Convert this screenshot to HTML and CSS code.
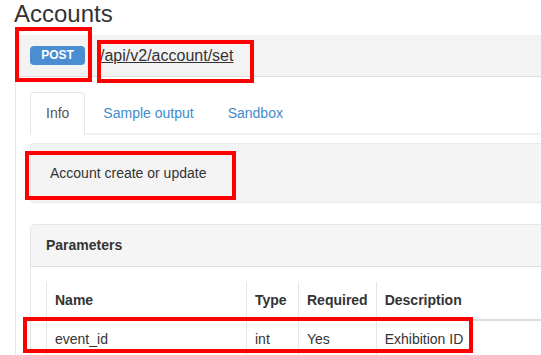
FILE: index.html
```html
<!DOCTYPE html>
<html lang="en">
<head>
    <meta charset="UTF-8">
    <meta name="viewport" content="width=device-width, initial-scale=1.0">
    <title>Accounts - API docs</title>
    <link rel="stylesheet" href="styles.css">
</head>
<body>
    <h1 class="page-title">Accounts</h1>

    <div class="endpoint">
        <div class="endpoint-heading">
            <span class="method-badge">POST</span>
            <a href="#" class="endpoint-path">/api/v2/account/set</a>
        </div>

        <div class="endpoint-body">
            <ul class="tabs">
                <li class="tab active"><a href="#">Info</a></li>
                <li class="tab"><a href="#">Sample output</a></li>
                <li class="tab"><a href="#">Sandbox</a></li>
            </ul>

            <div class="tab-content">
                <div class="well">Account create or update</div>

                <div class="panel">
                    <div class="panel-heading">Parameters</div>
                    <div class="panel-body">
                        <table class="params">
                            <thead>
                                <tr>
                                    <th class="col-name">Name</th>
                                    <th class="col-type">Type</th>
                                    <th class="col-req">Required</th>
                                    <th>Description</th>
                                </tr>
                            </thead>
                            <tbody>
                                <tr>
                                    <td>event_id</td>
                                    <td>int</td>
                                    <td>Yes</td>
                                    <td>Exhibition ID</td>
                                </tr>
                            </tbody>
                        </table>
                    </div>
                </div>
            </div>
        </div>
    </div>

    <!-- review markers -->
    <div class="marker marker-method"></div>
    <div class="marker marker-path"></div>
    <div class="marker marker-desc"></div>
    <div class="marker marker-row"></div>
</body>
</html>
```

FILE: styles.css
```css
:root {
    --text-color: #333;
    --link-color: #428bca;
    --border-color: #ddd;
    --light-border: #e6e6e6;
    --heading-bg: #f3f3f3;
    --marker-color: #ff0000;
}

* {
    margin: 0;
    padding: 0;
    box-sizing: border-box;
}

html {
    overflow: hidden;
}

body {
    position: relative;
    width: 600px;
    font-family: 'Liberation Sans', Arial, sans-serif;
    font-size: 14px;
    line-height: 20px;
    color: var(--text-color);
    background: white;
}

.page-title {
    font-size: 24px;
    font-weight: 400;
    line-height: 28px;
    padding-left: 14px;
    margin-bottom: 7px;
}

.endpoint {
    margin-left: 15px;
}

.endpoint-heading {
    display: flex;
    align-items: center;
    height: 42px;
    padding-left: 15px;
    background-color: var(--heading-bg);
    border-bottom: 1px solid var(--border-color);
}

.method-badge {
    display: inline-block;
    width: 55px;
    height: 19px;
    line-height: 19px;
    text-align: center;
    font-size: 12px;
    font-weight: 700;
    color: white;
    background-color: #4a8dd0;
    border-radius: 4px;
}

.endpoint-path {
    margin-left: 15px;
    font-size: 16px;
    color: var(--text-color);
    text-decoration: underline;
}

.endpoint-body {
    border-left: 1px solid var(--light-border);
    padding: 15px 0 0 14px;
}

.tabs {
    display: flex;
    list-style: none;
    border-bottom: 2px solid #f2f2f2;
}

.tab {
    margin-right: 2px;
    margin-bottom: -2px;
}

.tab a {
    display: block;
    padding: 10px 15px 11px;
    color: var(--link-color);
    text-decoration: none;
    border: 1px solid transparent;
    border-radius: 4px 4px 0 0;
}

.tab.active a {
    color: #555;
    background: white;
    border-color: var(--light-border);
    border-bottom-color: white;
}

.tab-content {
    padding-top: 8px;
}

.well {
    height: 60px;
    padding: 19px;
    background-color: #f4f4f4;
    border: 1px solid #e9e9e9;
    border-radius: 4px;
}

.panel {
    margin-top: 21px;
    border: 1px solid var(--light-border);
    border-radius: 4px;
}

.panel-heading {
    height: 42px;
    padding: 10px 15px;
    font-weight: 700;
    background-color: #f5f5f5;
    border-bottom: 1px solid var(--border-color);
}

.panel-body {
    padding: 15px;
}

.params {
    width: 100%;
    border-collapse: collapse;
}

.params th,
.params td {
    text-align: left;
    padding: 8px 8px 9px;
    border-left: 1px solid var(--light-border);
}

.params th {
    border-bottom: 2px solid var(--border-color);
}

.params td {
    border-bottom: 1px solid var(--light-border);
}

.col-name {
    width: 200px;
}

.col-type {
    width: 52px;
}

.col-req {
    width: 77px;
}

/* red review outlines drawn over the screenshot */
.marker {
    position: absolute;
    border: 4px solid var(--marker-color);
}

.marker-method {
    left: 15px;
    top: 27px;
    width: 77px;
    height: 55px;
}

.marker-path {
    left: 97px;
    top: 40px;
    width: 157px;
    height: 43px;
}

.marker-desc {
    left: 25px;
    top: 151px;
    width: 211px;
    height: 49px;
}

.marker-row {
    left: 23px;
    top: 317px;
    width: 450px;
    height: 36px;
}
```
